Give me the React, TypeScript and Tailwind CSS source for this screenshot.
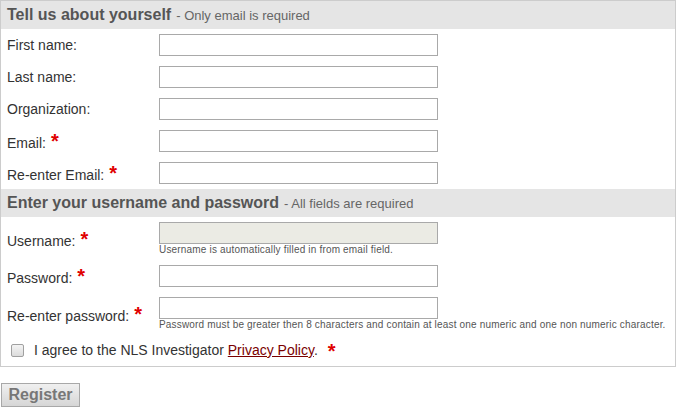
import React from "react";

const Star = () => (
  <span className="ml-[5px] text-[20px] font-bold leading-none text-[#e00000]">*</span>
);

type RowProps = { label: string; req?: boolean; help?: string; disabled?: boolean };

const Row = ({ label, req, help, disabled }: RowProps) => (
  <div className="flex items-center py-[5px] pl-[6px]">
    <div className="w-[152px] text-[14px] leading-[16px] text-[#333]">
      {label}
      {req && <Star />}
    </div>
    <div className="flex flex-col">
      <div
        className={
          disabled
            ? "h-[22px] w-[279px] border border-[#a9a9a9] bg-[#ebebe4]"
            : "h-[22px] w-[279px] border border-[#a9a9a9] bg-white"
        }
      />
      {help && (
        <div className="whitespace-nowrap text-[10px] leading-[11px] tracking-[0.18px] text-[#555]">
          {help}
        </div>
      )}
    </div>
  </div>
);

const Header = ({ title, sub }: { title: string; sub: string }) => (
  <div className="flex h-[28px] items-center bg-[#e5e5e5] pl-[6px] text-[#555]">
    <span className="text-[16px] font-bold leading-none">{title}</span>
    <span className="ml-[5px] text-[13px] leading-none text-[#666]">- {sub}</span>
  </div>
);

export default function App() {
  return (
    <div className="w-[676px] bg-white font-['Liberation_Sans',Arial,sans-serif]">
      <div className="border border-[#cccccc]">
        <Header title="Tell us about yourself" sub="Only email is required" />
        <Row label="First name:" />
        <Row label="Last name:" />
        <Row label="Organization:" />
        <Row label="Email:" req />
        <Row label="Re-enter Email:" req />
        <Header title="Enter your username and password" sub="All fields are required" />
        <Row
          label="Username:"
          req
          disabled
          help="Username is automatically filled in from email field."
        />
        <Row label="Password:" req />
        <Row
          label="Re-enter password:"
          req
          help="Password must be greater then 8 characters and contain at least one numeric and one non numeric character."
        />
        <div className="flex h-[31px] items-center pl-[10px] text-[14px] text-[#333]">
          <span className="mr-[10px] inline-block h-[13px] w-[13px] rounded-[2px] border border-[#a0a0a0] bg-gradient-to-b from-[#f4f4f4] to-[#dcdcdc]" />
          <span>
            I agree to the NLS Investigator{" "}
            <span className="text-[#7a0000] underline">Privacy Policy</span>.
          </span>
          <span className="ml-[10px] text-[20px] font-bold leading-none text-[#e00000]">*</span>
        </div>
      </div>
      <button className="ml-[1px] mt-[16px] h-[24px] w-[79px] border border-[#a8a8a8] bg-gradient-to-b from-[#f0f0f0] to-[#d6d6d6] text-[16px] font-bold leading-none text-[#777]">
        Register
      </button>
    </div>
  );
}
